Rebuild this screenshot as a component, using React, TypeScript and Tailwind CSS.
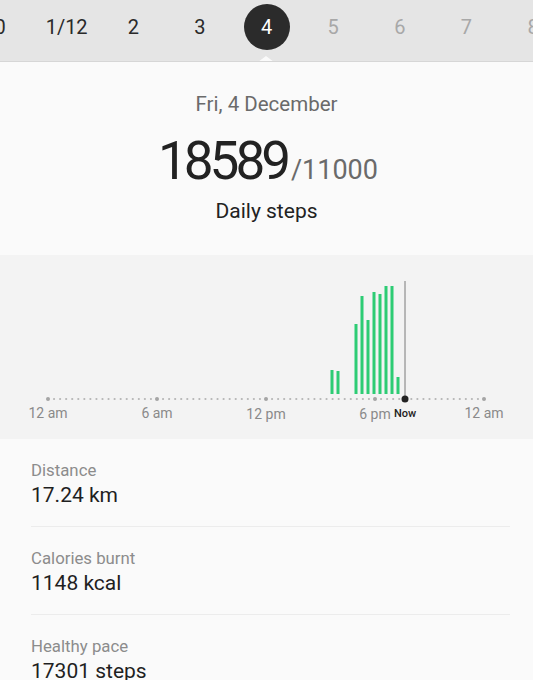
import React from "react";

const days = [
  { t: "0", c: "text-[#2a2a2a]" },
  { t: "1/12", c: "text-[#2a2a2a]" },
  { t: "2", c: "text-[#2a2a2a]" },
  { t: "3", c: "text-[#2a2a2a]" },
  { t: "4", c: "sel" },
  { t: "5", c: "text-[#a8a8a8]" },
  { t: "6", c: "text-[#a8a8a8]" },
  { t: "7", c: "text-[#a8a8a8]" },
  { t: "8", c: "text-[#a8a8a8]" },
];

const bars = [
  { x: 332, top: 369 },
  { x: 338, top: 370 },
  { x: 356, top: 323 },
  { x: 362, top: 295 },
  { x: 368, top: 319 },
  { x: 374, top: 291 },
  { x: 380, top: 293 },
  { x: 386, top: 285 },
  { x: 392, top: 285 },
  { x: 398, top: 376 },
];

function Chart() {
  const y0 = 254;
  const dots: number[] = [];
  for (let x = 48; x <= 484.5; x += 109 / 18) dots.push(x);
  const majors = [48, 157, 266, 375, 484];
  return (
    <svg width="533" height="184" viewBox={`0 ${y0} 533 184`} className="block">
      {dots.map((x, i) => (
        <circle key={i} cx={x} cy={398} r={1.1} fill="#b5b5b5" />
      ))}
      {majors.map((x) => (
        <circle key={x} cx={x} cy={398} r={2} fill="#a5a5a5" />
      ))}
      {bars.map((b, i) => (
        <rect key={i} x={b.x - 1.5} y={b.top} width={3} height={393 - b.top} fill="#2dcc74" />
      ))}
      <line x1={405} y1={280} x2={405} y2={398} stroke="#7a7a7a" strokeWidth={1} />
      <circle cx={405} cy={398} r={3.5} fill="#222" />
      <g fontFamily="Roboto, sans-serif" fontSize="14" fill="#8a8a8a" textAnchor="middle">
        <text x={48} y={417}>12 am</text>
        <text x={157} y={417}>6 am</text>
        <text x={266} y={418}>12 pm</text>
        <text x={375} y={418}>6 pm</text>
        <text x={484} y={417}>12 am</text>
      </g>
      <text x={405} y={416} fontFamily="Roboto, sans-serif" fontSize="11" fontWeight="500" fill="#222" textAnchor="middle">
        Now
      </text>
    </svg>
  );
}

function Row({ label, value, divider = true }: { label: string; value: string; divider?: boolean }) {
  return (
    <div className="mx-[23px] pl-[8px]">
      <div className={`pt-[21px] pb-[18px] ${divider ? "border-b border-[#ececec]" : ""}`}>
        <div className="text-[16.8px] leading-[20px] text-[#8c8c8c]">{label}</div>
        <div className="text-[21px] leading-[26px] text-[#1f1f1f] mt-[2px]">{value}</div>
      </div>
    </div>
  );
}

export default function App() {
  return (
    <div className="w-[533px] h-[680px] overflow-hidden bg-[#fafafa]" style={{ fontFamily: "Roboto, 'Noto Sans', sans-serif" }}>
      <div className="relative h-[62px] bg-[#e5e5e5] border-b border-[#d6d6d6] overflow-hidden">
        <div className="flex ml-[-33.3px] h-full items-center">
          {days.map((d) => (
            <div key={d.t} className="w-[66.625px] shrink-0 flex justify-center items-center">
              {d.c === "sel" ? (
                <div className="w-[46px] h-[46px] rounded-full bg-[#2b2b2b] text-white text-[20px] flex items-center justify-center mt-[-8px]">
                  {d.t}
                </div>
              ) : (
                <span className={`text-[20px] mt-[-7px] ${d.c}`}>{d.t}</span>
              )}
            </div>
          ))}
        </div>
        <div className="absolute left-[258px] bottom-[-1px] w-0 h-0 border-l-[8px] border-r-[8px] border-b-[6px] border-l-transparent border-r-transparent border-b-[#fafafa]" />
      </div>
      <div className="h-[193px] flex flex-col items-center pt-[30px]">
        <div className="text-[20.5px] leading-[24px] text-[#6a6a6a]">Fri, 4 December</div>
        <div className="flex items-baseline mt-[19px] leading-none h-[53px] ml-[3px]">
          <span className="text-[53px] leading-none text-[#222] tracking-[-4px] mr-[4px]">18589</span>
          <span className="text-[27px] leading-none text-[#6a6a6a]">/11000</span>
        </div>
        <div className="text-[21px] leading-[26px] text-[#222] mt-[10px]">Daily steps</div>
      </div>
      <div className="bg-[#f3f3f3] h-[184px]">
        <Chart />
      </div>
      <div>
        <Row label="Distance" value="17.24 km" />
        <Row label="Calories burnt" value="1148 kcal" />
        <Row label="Healthy pace" value="17301 steps" divider={false} />
      </div>
    </div>
  );
}
